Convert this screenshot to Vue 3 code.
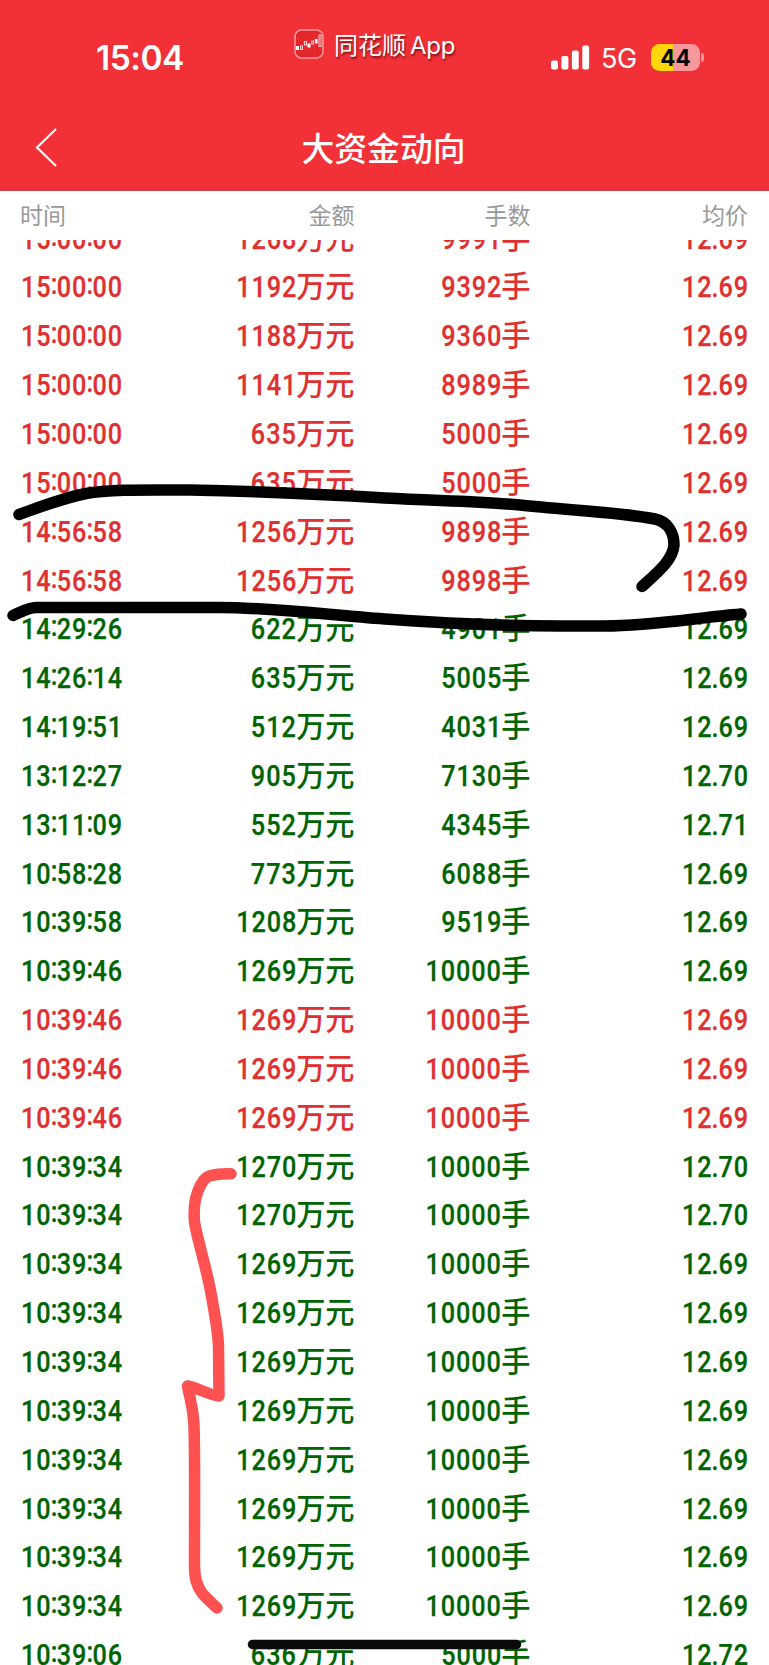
<script setup>
const groups = [
  ['up', '15:00:00', 1268, 9991, '12.69'],
  ['up', '15:00:00', 1192, 9392, '12.69'],
  ['up', '15:00:00', 1188, 9360, '12.69'],
  ['up', '15:00:00', 1141, 8989, '12.69'],
  ['up', '15:00:00', 635, 5000, '12.69', 2],
  ['up', '14:56:58', 1256, 9898, '12.69', 2],
  ['down', '14:29:26', 622, 4901, '12.69'],
  ['down', '14:26:14', 635, 5005, '12.69'],
  ['down', '14:19:51', 512, 4031, '12.69'],
  ['down', '13:12:27', 905, 7130, '12.70'],
  ['down', '13:11:09', 552, 4345, '12.71'],
  ['down', '10:58:28', 773, 6088, '12.69'],
  ['down', '10:39:58', 1208, 9519, '12.69'],
  ['down', '10:39:46', 1269, 10000, '12.69'],
  ['up', '10:39:46', 1269, 10000, '12.69', 3],
  ['down', '10:39:34', 1270, 10000, '12.70', 2],
  ['down', '10:39:34', 1269, 10000, '12.69', 8],
  ['down', '10:39:06', 636, 5000, '12.72'],
]
const rows = groups.flatMap(([dir, time, amount, lots, price, count = 1]) =>
  Array.from({ length: count }, () => ({ dir, time: time.split(':'), amount, lots, price: price.split('.') })),
)
</script>

<template>
  <main class="screen">
    <header class="top">
      <div class="status">
        <span class="clock">15:04</span>
        <div class="brand">
          <svg class="logo" width="30" height="30" viewBox="0 0 30 30">
            <rect x="1" y="1" width="28" height="28" rx="6.5" fill="#e3262b" stroke="#fa9a9d" stroke-width="1.5" />
            <path d="M2 9H28M2 20H28M20.500 2V28" stroke="#f1363b" stroke-width=".5" />
            <g fill="#fff"><rect x="2" y="17" width="3" height="4" /><rect x="13.500" y="14.500" width="3" height="4" /><rect x="21" y="10" width="2.600" height="4.500" /></g>
            <g fill="none" stroke="#fff" stroke-width=".8"><rect x="6.500" y="17" width="2" height="3.500" /><rect x="10.300" y="12.500" width="2.200" height="3.500" /><rect x="17.800" y="12" width="1.800" height="3" /><rect x="25" y="6" width="2" height="11.500" /></g>
          </svg>
          <span class="brand-name">同花顺<span class="latin">App</span></span>
        </div>
        <div class="signals">
          <svg width="39" height="25" viewBox="0 0 39 25" fill="#fff">
            <rect x="0" y="15.500" width="7" height="9" rx="2" />
            <rect x="10.400" y="11" width="7" height="13.500" rx="2" />
            <rect x="20.900" y="5.500" width="6.800" height="19" rx="2" />
            <rect x="31.300" y=".5" width="6.800" height="24" rx="2" />
          </svg>
          <span class="network">5G</span>
          <span class="battery">44</span>
          <i class="nub"></i>
        </div>
      </div>
      <div class="titlebar">
        <svg class="back" width="24" height="42" viewBox="0 0 24 42">
          <path d="M22 3L3 21.500L22 40" fill="none" stroke="#fff" stroke-width="2.200" />
        </svg>
        <h1>大资金动向</h1>
      </div>
    </header>

    <div class="cols labels">
      <span>时间</span><span>金额</span><span>手数</span><span>均价</span>
    </div>

    <section class="list">
      <div class="track">
        <div v-for="(r, i) in rows" :key="i" class="cols row" :class="r.dir">
          <span><b class="num start">{{ r.time[0] }}<i class="colon">:</i>{{ r.time[1] }}<i class="colon">:</i>{{ r.time[2] }}</b></span>
          <span><b class="num">{{ r.amount }}</b>万元</span>
          <span><b class="num">{{ r.lots }}</b>手</span>
          <span><b class="num">{{ r.price[0] }}<i class="point">.</i>{{ r.price[1] }}</b></span>
        </div>
      </div>
    </section>

    <svg class="marks" width="769" height="1665" viewBox="0 0 769 1665" fill="none" stroke-linecap="round" stroke-linejoin="round">
      <g stroke="#000" stroke-width="11.500">
        <path d="M19 514.500C40 507 63 498 86 493.500C110 489 150 490 190 490C245 491 320 494 385 498C440 501 475 501 520 505C565 510 620 512 655 519C669 522 674 534 674 545C673 560 657 573 642 586.500" />
        <path d="M13 615.500C21 612 29 607.500 36 607.500H220C270 607.500 320 614 385 619C440 623 500 626 560 626H605C650 626 695 618 741 614" />
      </g>
      <path d="M231 1173.800C222 1174 211 1174 206 1178C201 1182 197 1193 195.500 1199C194 1207 194 1216 194.500 1222C197 1238 205 1263 210 1288C214 1309 218 1331 218.500 1346L219 1396C212 1396 195 1387 187.500 1386C190 1400 193 1405 194 1425C195 1455 194.500 1498 194.500 1565C194.500 1577 196 1585 202 1593C207 1599 212 1603 217 1608" stroke="#fd5152" stroke-width="11.500" />
      <path d="M252.500 1644.500H516.500" stroke="#0a0a0a" stroke-width="9.500" />
    </svg>
  </main>
</template>

<style>
body { margin: 0; }
</style>

<style scoped>
.screen {
  position: relative;
  display: flex;
  flex-direction: column;
  width: 769px;
  height: 1665px;
  overflow: hidden;
  background: #fff;
  font-family: "Noto Sans CJK SC", sans-serif;
}
.top {
  flex: none;
  box-sizing: border-box;
  height: 191px;
  background: #f23038;
  border-bottom: 1px solid #d6404a;
  color: #fff;
}
.status {
  display: grid;
  grid-template-columns: 294px 257px 1fr;
  height: 106px;
}
.clock {
  padding: 38px 0 0 96px;
  font: 600 33.500px/40px Inter, sans-serif;
  letter-spacing: -0.5px;
}
.brand {
  display: flex;
  height: 30px;
  margin-top: 29px;
  gap: 10px;
  font-size: 24px;
  line-height: 31px;
  white-space: nowrap;
  text-shadow: 1px 2px 2px rgba(70, 0, 0, 0.65);
}
.brand-name { margin-top: -1px; }
.latin {
  margin-left: 4px;
  font-family: Inter, sans-serif;
  font-size: 24px;
  letter-spacing: -0.2px;
}
.signals {
  display: flex;
  align-items: center;
  height: 30px;
  margin-top: 42px;
}
.network {
  width: 36px;
  margin: 3px 0 0 11px;
  font: 400 27px/30px Inter, sans-serif;
  letter-spacing: -0.4px;
}
.battery {
  width: 49px;
  height: 27px;
  margin-left: 14px;
  border-radius: 8.500px;
  background: linear-gradient(90deg, #ffd60a 22px, #f8979c 22px);
  color: #000;
  text-align: center;
  font: 700 22.500px/27px Inter, sans-serif;
}
.nub {
  width: 3px;
  height: 9px;
  margin-left: 1px;
  border-radius: 0 4px 4px 0;
  background: #f8979c;
}
.titlebar {
  display: grid;
  grid-template-columns: 60px 1fr 60px;
  align-items: center;
  height: 84px;
}
.back { margin: -2px 0 0 34px; }
h1 {
  margin: -3px 2px 0 0;
  text-align: center;
  font-size: 32.800px;
  font-weight: 500;
  line-height: 48px;
}
.cols {
  display: grid;
  grid-template-columns: 160px 174.500px 176px 217.500px;
  padding: 0 20px;
  text-align: right;
  white-space: nowrap;
}
.cols > :first-child { text-align: left; }
.labels {
  flex: none;
  height: 49px;
  color: #999;
  font-size: 23px;
  font-weight: 400;
  line-height: 47px;
}
.list {
  flex: 1;
  min-height: 0;
  overflow: hidden;
}
.track { margin-top: -28.400px; }
.row {
  height: 48.850px;
  font-size: 29.200px;
  font-weight: 500;
  line-height: 48.850px;
}
.num {
  display: inline-block;
  margin-right: -0.8px;
  transform: scaleX(0.87);
  transform-origin: right center;
  font-family: Roboto, sans-serif;
  font-size: 29px;
  font-weight: 500;
  letter-spacing: 1.1px;
  -webkit-text-stroke: 0.25px currentColor;
}
.start {
  margin-left: 1.2px;
  transform-origin: left center;
}
.colon {
  margin: 0 -0.9px;
  font-style: normal;
  letter-spacing: 0;
  line-height: 0;
  vertical-align: 3px;
}
.point {
  margin: 0 -1.2px;
  font-style: normal;
}
.up { color: #e03030; }
.down { color: #006400; }
.marks {
  position: absolute;
  inset: 0;
}
</style>
